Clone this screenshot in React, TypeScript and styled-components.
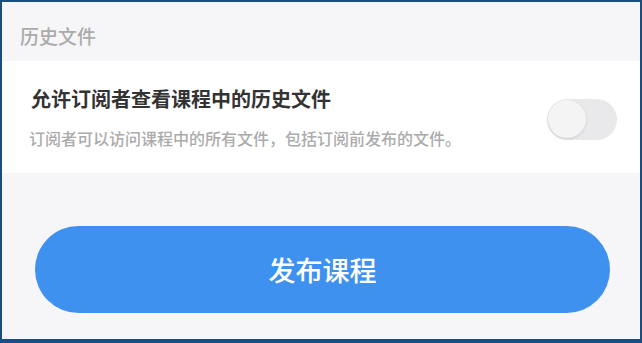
import * as React from 'react';
import styled, { createGlobalStyle } from 'styled-components';

const GlobalStyle = createGlobalStyle`
  html, body {
    margin: 0;
    padding: 0;
    background: #f6f6f8;
  }
  * {
    box-sizing: border-box;
  }
`;

const App = () => {
  const [allowed, setAllowed] = React.useState(false);

  return (
    <>
      <GlobalStyle />
      <Frame>
        <SectionHeader>历史文件</SectionHeader>
        <SettingCard>
          <SettingText>
            <SettingTitle>允许订阅者查看课程中的历史文件</SettingTitle>
            <SettingHint>
              订阅者可以访问课程中的所有文件，包括订阅前发布的文件。
            </SettingHint>
          </SettingText>
          <Switch
            type="button"
            $on={allowed}
            aria-pressed={allowed}
            onClick={() => setAllowed((v) => !v)}
          >
            <Knob $on={allowed} />
          </Switch>
        </SettingCard>
        <Footer>
          <PublishButton type="button">发布课程</PublishButton>
        </Footer>
      </Frame>
    </>
  );
};

const Frame = styled.div`
  width: 642px;
  height: 343px;
  border: 2px solid #1b4e80;
  border-bottom-width: 4px;
  background: #f6f6f8;
  display: flex;
  flex-direction: column;
  font-family: 'Noto Sans CJK SC', 'Noto Sans', sans-serif;
  overflow: hidden;
`;

const SectionHeader = styled.div`
  height: 59px;
  padding: 8px 0 0 18px;
  display: flex;
  align-items: center;
  font-size: 19px;
  font-weight: 500;
  color: #ababab;
`;

const SettingCard = styled.div`
  height: 112px;
  background: #fff;
  display: flex;
  align-items: center;
  padding: 0 23px 0 29px;
`;

const SettingText = styled.div`
  flex: 1;
  display: flex;
  flex-direction: column;
  gap: 16px;
`;

const SettingTitle = styled.div`
  font-size: 20px;
  font-weight: 600;
  color: #333;
  line-height: 26px;
`;

const SettingHint = styled.div`
  font-size: 16px;
  font-weight: 500;
  color: #ababab;
  line-height: 20px;
  margin-left: -2px;
`;

const Switch = styled.button<{ $on: boolean }>`
  width: 70px;
  height: 41px;
  border: none;
  padding: 1px;
  border-radius: 21px;
  background: ${({ $on }) => ($on ? '#3f91ef' : '#e9e9eb')};
  display: flex;
  align-items: center;
  justify-content: ${({ $on }) => ($on ? 'flex-end' : 'flex-start')};
  cursor: pointer;
  margin-top: 4px;
`;

const Knob = styled.span<{ $on: boolean }>`
  width: 38px;
  height: 38px;
  border-radius: 50%;
  background: #f4f4f5;
  box-shadow: 0 1px 3px rgba(0, 0, 0, 0.12);
`;

const Footer = styled.div`
  flex: 1;
  padding: 53px 30px 0 33px;
`;

const PublishButton = styled.button`
  width: 100%;
  height: 87px;
  border: none;
  border-radius: 44px;
  background: #3f91ef;
  color: #fff;
  font-family: 'Noto Sans CJK SC', 'Noto Sans', sans-serif;
  font-size: 27px;
  font-weight: 500;
  cursor: pointer;
  padding-bottom: 2px;
`;

export default App;
